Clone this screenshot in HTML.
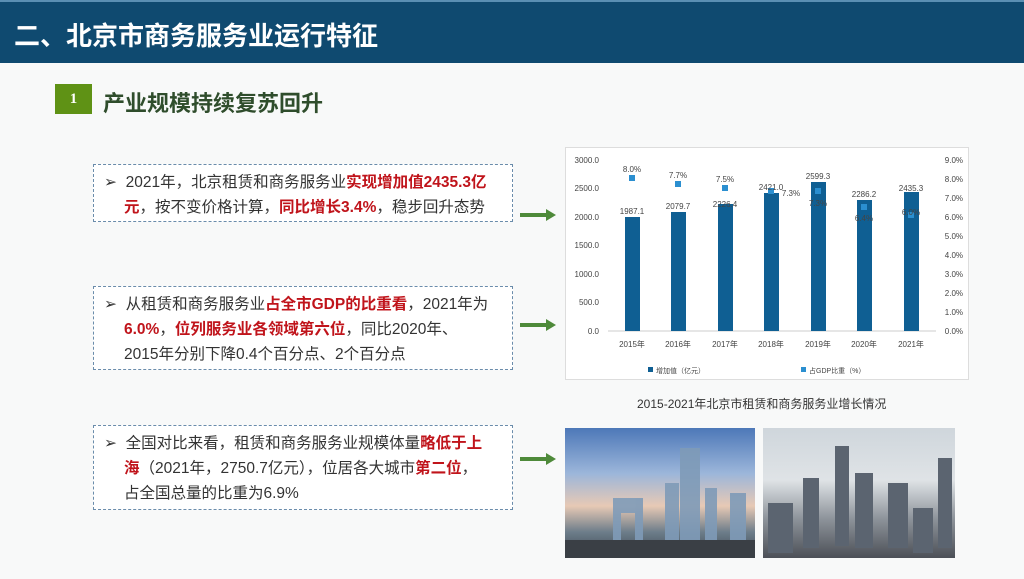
<!DOCTYPE html>
<html><head><meta charset="utf-8"><style>
body{margin:0;width:1024px;height:579px;position:relative;overflow:hidden;background:#f8f9f9;font-family:"Liberation Sans","Noto Sans CJK SC",sans-serif;}
.hdr{position:absolute;left:0;top:0;width:1024px;height:63px;background:#0f4a70;border-top:2px solid #5a8fb3;box-sizing:border-box;}
.hdr span{position:absolute;left:14px;top:14px;color:#fff;font-size:26px;font-weight:bold;}
.num{position:absolute;left:55px;top:84px;width:37px;height:30px;background:#5f9215;color:#fff;font-family:"Liberation Serif",serif;font-weight:bold;font-size:15px;text-align:center;line-height:30px;}
.sub{position:absolute;left:103px;top:86px;font-size:22px;font-weight:bold;color:#2f4d2c;}
.box{position:absolute;left:93px;width:420px;border:1px dashed #6a8cab;box-sizing:border-box;padding:5px 6px 0 10px;font-size:15.5px;line-height:25px;color:#333;background:#fff;white-space:nowrap;}
.box p{margin:0;padding-left:20px;text-indent:-20px;}
.r{color:#c0141b;font-weight:bold;}
.arr{position:absolute;left:520px;width:36px;height:14px;}
.chart{position:absolute;left:565px;top:147px;width:404px;height:233px;border:1px solid #ddd;background:#fff;box-sizing:border-box;}
.cap{position:absolute;left:637px;top:395px;font-size:12px;color:#333;}
.ph{position:absolute;top:428px;height:130px;}
</style></head><body>
<div class="hdr"><span>二、北京市商务服务业运行特征</span></div>
<div class="num">1</div>
<div class="sub">产业规模持续复苏回升</div>

<div class="box" style="top:164px;height:58px;"><p>➢&nbsp; 2021年，北京租赁和商务服务业<span class="r">实现增加值2435.3亿<br>元</span>，按不变价格计算，<span class="r">同比增长3.4%</span>，稳步回升态势</p></div>
<div class="box" style="top:286px;height:84px;"><p>➢&nbsp; 从租赁和商务服务业<span class="r">占全市GDP的比重看</span>，2021年为<br><span class="r">6.0%</span>，<span class="r">位列服务业各领域第六位</span>，同比2020年、<br>2015年分别下降0.4个百分点、2个百分点</p></div>
<div class="box" style="top:425px;height:85px;"><p>➢&nbsp; 全国对比来看，租赁和商务服务业规模体量<span class="r">略低于上<br>海</span>（2021年，2750.7亿元），位居各大城市<span class="r">第二位</span>，<br>占全国总量的比重为6.9%</p></div>

<svg class="arr" style="top:208px" viewBox="0 0 36 14"><path d="M0 5h26V1l10 6-10 6V9H0z" fill="#4e8a3a"/></svg>
<svg class="arr" style="top:318px" viewBox="0 0 36 14"><path d="M0 5h26V1l10 6-10 6V9H0z" fill="#4e8a3a"/></svg>
<svg class="arr" style="top:452px" viewBox="0 0 36 14"><path d="M0 5h26V1l10 6-10 6V9H0z" fill="#4e8a3a"/></svg>

<div class="chart">
<svg width="404" height="233" viewBox="565 147 404 233" style="font-family:'Liberation Sans','Noto Sans CJK SC',sans-serif;font-size:8px;fill:#444">
<line x1="607" y1="330" x2="935" y2="330" stroke="#ccc"/>
<g text-anchor="end">
<text x="598" y="162">3000.0</text><text x="598" y="190">2500.0</text><text x="598" y="219">2000.0</text><text x="598" y="247">1500.0</text><text x="598" y="276">1000.0</text><text x="598" y="304">500.0</text><text x="598" y="333">0.0</text>
<text x="962" y="162">9.0%</text><text x="962" y="181">8.0%</text><text x="962" y="200">7.0%</text><text x="962" y="219">6.0%</text><text x="962" y="238">5.0%</text><text x="962" y="257">4.0%</text><text x="962" y="276">3.0%</text><text x="962" y="295">2.0%</text><text x="962" y="314">1.0%</text><text x="962" y="333">0.0%</text>
</g>
<g fill="#0f5f93">
<rect x="624" y="216" width="15" height="114"/><rect x="670" y="211" width="15" height="119"/><rect x="717" y="203" width="15" height="127"/><rect x="763" y="192" width="15" height="138"/><rect x="810" y="181" width="15" height="149"/><rect x="856" y="199" width="15" height="131"/><rect x="903" y="191" width="15" height="139"/>
</g>
<g fill="#2b8fd0">
<rect x="628" y="174" width="6" height="6"/><rect x="674" y="180" width="6" height="6"/><rect x="721" y="184" width="6" height="6"/><rect x="767" y="187" width="6" height="6"/><rect x="814" y="187" width="6" height="6"/><rect x="860" y="203" width="6" height="6"/><rect x="907" y="211" width="6" height="6"/>
</g>
<g text-anchor="middle">
<text x="631" y="213">1987.1</text><text x="677" y="208">2079.7</text><text x="724" y="206">2226.4</text><text x="770" y="189">2421.0</text><text x="817" y="178">2599.3</text><text x="863" y="196">2286.2</text><text x="910" y="190">2435.3</text>
<text x="631" y="171">8.0%</text><text x="677" y="177">7.7%</text><text x="724" y="181">7.5%</text><text x="790" y="195">7.3%</text><text x="817" y="205">7.3%</text><text x="863" y="220">6.4%</text><text x="910" y="214">6.0%</text>
<text x="631" y="346">2015年</text><text x="677" y="346">2016年</text><text x="724" y="346">2017年</text><text x="770" y="346">2018年</text><text x="817" y="346">2019年</text><text x="863" y="346">2020年</text><text x="910" y="346">2021年</text>
</g>
<rect x="647" y="366" width="5" height="5" fill="#0f5f93"/><text x="655" y="372" font-size="7">增加值（亿元）</text>
<rect x="800" y="366" width="5" height="5" fill="#2b8fd0"/><text x="808" y="372" font-size="7">占GDP比重（%）</text>
</svg>
</div>
<div class="cap">2015-2021年北京市租赁和商务服务业增长情况</div>

<div class="ph" style="left:565px;width:190px;background:linear-gradient(180deg,#4d78b8 0%,#9cb6da 35%,#e7c9b5 60%,#6d7d8a 80%,#3c4650 100%);">
<svg width="190" height="130"><g fill="#7f9bb8" opacity=".9"><rect x="115" y="20" width="20" height="95"/><rect x="100" y="55" width="14" height="60"/><rect x="140" y="60" width="12" height="55"/><rect x="165" y="65" width="16" height="50"/><path d="M48 70h30v45h-8V85H56v30h-8z"/></g><rect x="0" y="112" width="190" height="18" fill="#3a3f45"/></svg></div>
<div class="ph" style="left:763px;width:192px;background:linear-gradient(180deg,#cfd6dc 0%,#dfe3e6 40%,#8d939a 70%,#4c5057 100%);">
<svg width="192" height="130"><g fill="#5b6470"><rect x="72" y="18" width="14" height="100"/><rect x="92" y="45" width="18" height="75"/><rect x="175" y="30" width="14" height="90"/><rect x="40" y="50" width="16" height="70"/><rect x="125" y="55" width="20" height="65"/><rect x="5" y="75" width="25" height="50"/><rect x="150" y="80" width="20" height="45"/></g></svg></div>
</body></html>
